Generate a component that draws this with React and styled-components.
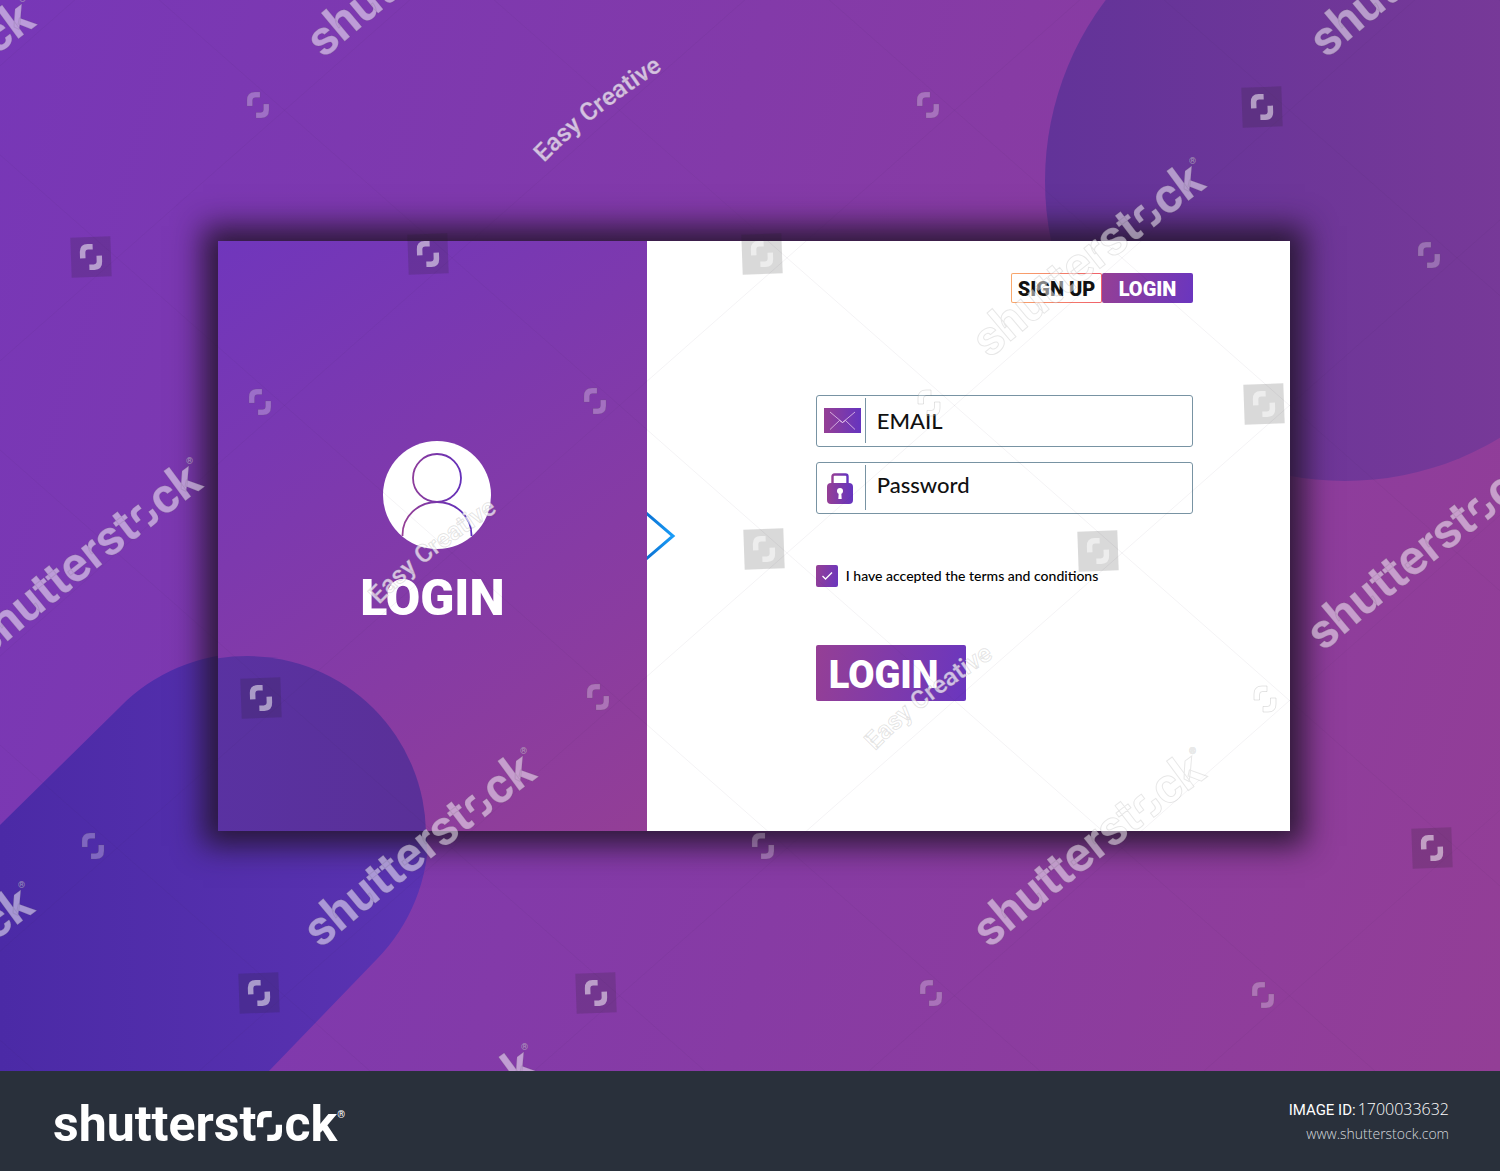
import React from "react";
import styled, { createGlobalStyle } from "styled-components";

const GlobalStyle = createGlobalStyle`
  * { box-sizing: border-box; }
  body { margin: 0; font-family: Lato, "Open Sans", sans-serif; color: #111; }
`;

const brand = "linear-gradient(100deg, #953f95 0%, #6a36bf 100%)";

const Page = styled.div`
  display: flex;
  flex-direction: column;
  min-height: 100vh;
`;

const Scene = styled.main`
  position: relative;
  flex: 1;
  display: flex;
  align-items: center;
  padding: 40px 210px 40px 218px;
  overflow: hidden;
  background: linear-gradient(106deg, #7737b7 0%, #933e96 100%);
`;

const CornerArt = styled.svg`
  position: absolute;
  ${(p) => (p.$corner === "top-right" ? "top: 0; right: 0;" : "bottom: 0; left: 0;")}
`;

const Card = styled.section`
  position: relative;
  flex: 1;
  display: flex;
  min-height: 590px;
  box-shadow: 0 0 28px 15px rgba(34, 20, 42, 0.88);
`;

const Welcome = styled.div`
  position: relative;
  width: 40%;
  display: flex;
  flex-direction: column;
  align-items: center;
  justify-content: center;
  gap: 24px;
  padding-bottom: 8px;
  overflow: hidden;
  background: linear-gradient(145deg, #7036bc 0%, #933e96 100%);
`;

const Avatar = styled.svg`
  position: relative;
  display: block;
  margin-left: 10px;
`;

const Title = styled.h1`
  position: relative;
  margin: 0;
  font: 900 50px/50px Roboto, sans-serif;
  color: #fff;
`;

const FormSide = styled.div`
  position: relative;
  flex: 1;
  padding: 32px 97px 48px 169px;
  background: #fff;
`;

const Pointer = styled.svg`
  position: absolute;
  left: 0;
  top: 50%;
  margin-top: -24px;
`;

const Tabs = styled.nav`
  display: flex;
  justify-content: flex-end;
`;

const Tab = styled.button`
  width: 91px;
  height: 30px;
  padding: 2px 0 0;
  border: 1px solid transparent;
  border-radius: 2px;
  font: 900 20px/26px Roboto, sans-serif;
  white-space: nowrap;
  color: ${(p) => (p.$active ? "#fff" : "#111")};
  background: ${(p) =>
    p.$active
      ? `${brand} border-box`
      : "linear-gradient(#fff, #fff) padding-box, linear-gradient(90deg, #f9a86c, #f0606a) border-box"};
`;

const Form = styled.form`
  display: flex;
  flex-direction: column;
  align-items: flex-start;
  margin-top: 92px;
`;

const Field = styled.label`
  display: flex;
  align-items: center;
  width: 100%;
  height: 52px;
  margin-bottom: 15px;
  border: 1px solid #7893a3;
  border-radius: 3px;
`;

const FieldIcon = styled.span`
  display: flex;
  align-items: center;
  width: 49px;
  height: 45px;
  padding-left: 7px;
  border-right: 1px solid #7893a3;
`;

const Input = styled.input`
  flex: 1;
  min-width: 0;
  height: 100%;
  padding: 0 11px ${(p) => (p.$raised ? 6 : 0)}px;
  border: 0;
  outline: 0;
  background: none;
  font: 500 22px/28px Lato, sans-serif;
  color: #111;
  &::placeholder { color: #111; opacity: 1; }
`;

const Terms = styled.label`
  display: flex;
  align-items: center;
  gap: 8px;
  margin-top: 36px;
  font: 500 14px/21px Lato, sans-serif;
  color: #000;
`;

const CheckBox = styled.span`
  display: grid;
  width: 22px;
  height: 22px;
  border-radius: 2px;
  background: ${brand};
  & > * { grid-area: 1 / 1; margin: 0; width: 22px; height: 22px; }
  & > input { appearance: none; }
  & > svg { pointer-events: none; }
  & > input:not(:checked) + svg { visibility: hidden; }
`;

const Submit = styled.button`
  width: 150px;
  height: 56px;
  margin-top: 58px;
  padding: 4px 0 0 13px;
  border: 0;
  border-radius: 2px;
  text-align: left;
  font: 900 38px/52px Roboto, sans-serif;
  color: #fff;
  background: ${brand};
`;

const Overlay = styled.svg`
  position: absolute;
  inset: 0;
  width: 100%;
  height: 100%;
  pointer-events: none;
  font-family: Roboto, sans-serif;
`;

const Footer = styled.footer`
  display: flex;
  align-items: center;
  justify-content: space-between;
  height: 100px;
  padding: 0 51px 0 53px;
  background: #29303b;
  color: #fff;
`;

const Logo = styled.a`
  display: flex;
  align-items: baseline;
  padding-top: 6px;
  font: 700 50px/60px Roboto, sans-serif;
  color: #fff;
  text-decoration: none;
  & > svg { margin: 0 2px 0 1px; }
`;

const Registered = styled.span`
  align-self: flex-start;
  font-size: 10px;
  line-height: 42px;
`;

const Credit = styled.div`
  text-align: right;
  font: 300 16px/24px "Open Sans", sans-serif;
`;

const CreditLabel = styled.span`
  margin-right: 2px;
  font: 400 15px/24px Roboto, sans-serif;
`;

const SiteLink = styled.a`
  display: block;
  font-size: 14px;
  color: #d5d8dc;
  text-decoration: none;
`;

const BracketShape = () => (
  <>
    <path d="M0 14V8Q0 0 8 0H13V5.500H8.500Q5.500 5.500 5.500 8.500V14Z" />
    <path d="M22 12V18Q22 26 14 26H9V20.500H13.500Q16.500 20.500 16.500 17.500V12Z" />
  </>
);

const wordmarks = [
  [335, 947], [1004, 947], [1004, 357], [1338, 650], [1, 657],
  [338, 57], [1341, 57], [-166, 195], [-167, 1081], [336, 1243],
];
const bylines = [[544, 163], [379, 605], [875, 751]];
const tiles = [
  [91, 257], [428, 254], [762, 254], [1262, 107], [1264, 404], [764, 549],
  [1098, 551], [1432, 848], [261, 698], [259, 993], [596, 993],
];
const marks = [
  [258, 105], [928, 105], [1429, 255], [260, 402], [595, 401], [929, 403],
  [598, 697], [93, 846], [763, 846], [1265, 699], [931, 993], [1263, 995],
];
const diagonals = Array.from({ length: 13 }, (_, i) => -1225 + i * 335);

function Watermark() {
  return (
    <Overlay aria-hidden="true">
      <defs>
        <path id="wordCurve" d="M-14 2Q96 -93 232 -191" />
        <path id="byCurve" d="M0 0Q44 -46 124 -97" />
      </defs>
      <g stroke="#40305c" strokeOpacity="0.06">
        {diagonals.map((x) => (
          <React.Fragment key={x}>
            <line x1={x} y1="-39" x2={x + 1344} y2="1145" />
            <line x1={x + 1344} y1="-39" x2={x} y2="1145" />
          </React.Fragment>
        ))}
      </g>
      {tiles.map(([x, y]) => (
        <g key={`${x}-${y}`} transform={`translate(${x} ${y}) rotate(-2)`}>
          <rect x="-20" y="-20" width="40" height="40" fill="#201c20" fillOpacity="0.17" />
          <g transform="translate(-11 -13)" fill="#fff" fillOpacity="0.52">
            <BracketShape />
          </g>
        </g>
      ))}
      <g fill="#fff" fillOpacity="0.28" stroke="#555" strokeOpacity="0.16">
        {marks.map(([x, y]) => (
          <g key={`${x}-${y}`} transform={`translate(${x - 11} ${y - 13})`}>
            <BracketShape />
          </g>
        ))}
      </g>
      <g fill="#fff" fillOpacity="0.5" stroke="#555" strokeOpacity="0.14">
        {wordmarks.map(([x, y]) => (
          <g key={`${x}-${y}`} transform={`translate(${x} ${y})`} fontSize="49" fontWeight="700">
            <text><textPath href="#wordCurve">shutterst</textPath></text>
            <g transform="translate(141 -123) rotate(-37) translate(2 -26)">
              <BracketShape />
            </g>
            <text><textPath href="#wordCurve" startOffset="226">ck</textPath></text>
            <text x="185" y="-193" fontSize="9" fontWeight="400">®</text>
          </g>
        ))}
      </g>
      <g fill="#fff" fillOpacity="0.7" stroke="#777" strokeOpacity="0.2" fontSize="25" fontWeight="600">
        {bylines.map(([x, y]) => (
          <text key={x} transform={`translate(${x} ${y})`}>
            <textPath href="#byCurve">Easy Creative</textPath>
          </text>
        ))}
      </g>
    </Overlay>
  );
}

const MailIcon = () => (
  <svg width="37" height="25" viewBox="0 0 37 25" aria-hidden="true">
    <defs>
      <linearGradient id="mailFill"><stop stopColor="#953f95" /><stop offset="1" stopColor="#6534bf" /></linearGradient>
    </defs>
    <rect width="37" height="25" fill="url(#mailFill)" />
    <path d="M6 4L18.500 14.500L31 4M6 21.500L15.500 12.500M31 21.500L21.500 12.500M15.500 12.500L18.500 14.500L21.500 12.500" fill="none" stroke="#e6c8ee" strokeWidth="0.8" />
  </svg>
);

const LockIcon = () => (
  <svg width="32" height="32" viewBox="0 0 32 32" aria-hidden="true">
    <defs>
      <linearGradient id="lockFill"><stop stopColor="#953f95" /><stop offset="1" stopColor="#6534bf" /></linearGradient>
    </defs>
    <path d="M8.500 12V4.500Q8.500 2.500 10.500 2.500H21.500Q23.500 2.500 23.500 4.500V12" fill="none" stroke="url(#lockFill)" strokeWidth="2.400" />
    <rect x="3" y="11" width="26" height="21" rx="4" fill="url(#lockFill)" />
    <circle cx="16" cy="19" r="3" fill="#fff" />
    <path d="M14.800 19H17.200L17.700 27H14.300Z" fill="#fff" />
  </svg>
);

export default function App() {
  return (
    <Page>
      <GlobalStyle />
      <Scene>
        <CornerArt $corner="top-right" width="455" height="482" aria-hidden="true">
          <defs>
            <linearGradient id="discFill"><stop stopColor="#623399" /><stop offset="0.8" stopColor="#783998" /></linearGradient>
          </defs>
          <circle cx="300" cy="181" r="300" fill="url(#discFill)" />
        </CornerArt>
        <CornerArt $corner="bottom-left" width="427" height="417" aria-hidden="true">
          <defs>
            <linearGradient id="pillFill"><stop stopColor="#4b2aa6" /><stop offset="1" stopColor="#5b33b2" /></linearGradient>
          </defs>
          <path d="M0 171L120 53A179 179 0 0 1 377 305L269 417H0Z" fill="url(#pillFill)" />
        </CornerArt>

        <Card>
          <Welcome>
            <CornerArt $corner="bottom-left" width="209" height="176" aria-hidden="true">
              <defs>
                <linearGradient id="capFill"><stop stopColor="#5933a8" /><stop offset="1" stopColor="#5a3098" /></linearGradient>
              </defs>
              <circle cx="29" cy="180" r="179" fill="url(#capFill)" />
            </CornerArt>
            <Avatar width="108" height="108" viewBox="0 0 108 108" aria-hidden="true">
              <defs>
                <linearGradient id="personStroke" gradientUnits="userSpaceOnUse" x1="20" x2="90" y1="0" y2="0">
                  <stop stopColor="#953f95" /><stop offset="1" stopColor="#5a2cc0" />
                </linearGradient>
              </defs>
              <circle cx="54" cy="54" r="54" fill="#fff" />
              <g fill="none" stroke="url(#personStroke)" strokeWidth="1.800">
                <circle cx="54" cy="37" r="24" />
                <path d="M19.500 95V94A34.500 33 0 0 1 88.500 94V95" />
              </g>
            </Avatar>
            <Title>LOGIN</Title>
          </Welcome>

          <FormSide>
            <Pointer width="29" height="48" viewBox="0 0 29 48" aria-hidden="true">
              <defs>
                <linearGradient id="pointerStroke"><stop stopColor="#0a6fd0" /><stop offset="1" stopColor="#1a9df8" /></linearGradient>
              </defs>
              <path d="M-1 1L26 24L-1 47" fill="none" stroke="url(#pointerStroke)" strokeWidth="3" />
            </Pointer>
            <Tabs>
              <Tab type="button">SIGN UP</Tab>
              <Tab type="button" $active>LOGIN</Tab>
            </Tabs>
            <Form onSubmit={(e) => e.preventDefault()}>
              <Field>
                <FieldIcon><MailIcon /></FieldIcon>
                <Input type="email" placeholder="EMAIL" aria-label="Email" />
              </Field>
              <Field>
                <FieldIcon><LockIcon /></FieldIcon>
                <Input type="password" placeholder="Password" aria-label="Password" $raised />
              </Field>
              <Terms>
                <CheckBox>
                  <input type="checkbox" defaultChecked />
                  <svg viewBox="0 0 22 22" aria-hidden="true">
                    <path d="M6.500 11L9.500 14L16 7.500" fill="none" stroke="#fff" strokeWidth="1.300" />
                  </svg>
                </CheckBox>
                I have accepted the terms and conditions
              </Terms>
              <Submit type="submit">LOGIN</Submit>
            </Form>
          </FormSide>
        </Card>
        <Watermark />
      </Scene>

      <Footer>
        <Logo href="#home" aria-label="shutterstock">
          <span>shutterst</span>
          <svg width="25" height="30" viewBox="0 0 22 26" preserveAspectRatio="none" fill="#fff" aria-hidden="true">
            <BracketShape />
          </svg>
          <span>ck</span>
          <Registered>®</Registered>
        </Logo>
        <Credit>
          <CreditLabel>IMAGE ID:</CreditLabel>1700033632
          <SiteLink href="#site">www.shutterstock.com</SiteLink>
        </Credit>
      </Footer>
    </Page>
  );
}
